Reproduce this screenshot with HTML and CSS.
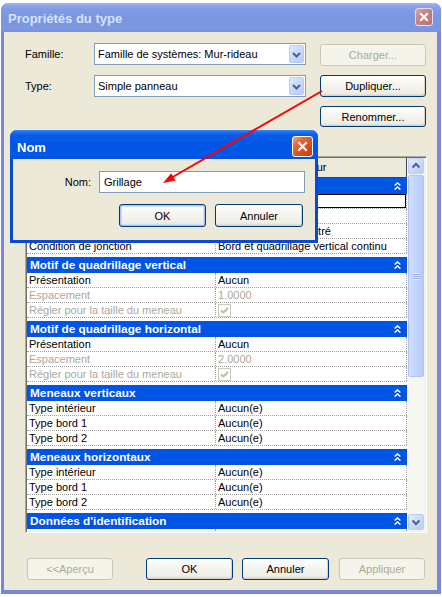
FILE: index.html
```html
<!DOCTYPE html>
<html lang="fr">
<head>
<meta charset="utf-8">
<title>Propriétés du type</title>
<link rel="stylesheet" href="styles.css">
</head>
<body>
<div class="win">
  <div class="win-title">
    <span class="win-title-text">Propriétés du type</span>
    <span class="xbtn xbtn-inactive"><svg width="10" height="10" viewBox="0 0 10 10"><path d="M1.2 1.2 L8.8 8.8 M8.8 1.2 L1.2 8.8" stroke="#fff" stroke-width="2.1" fill="none"/></svg></span>
  </div>
  <div class="client">
    <div class="form">
      <span class="lbl">Famille:</span>
      <div class="combo"><span class="combo-text">Famille de systèmes: Mur-rideau</span><span class="combo-btn"><svg width="13" height="17" viewBox="0 0 13 17"><path d="M3 7 L6.5 10.5 L10 7" fill="none" stroke="#4D6185" stroke-width="2"/></svg></span></div>
      <button class="btn is-disabled btn-charger">Charger...</button>
      <span class="lbl">Type:</span>
      <div class="combo"><span class="combo-text">Simple panneau</span><span class="combo-btn"><svg width="13" height="17" viewBox="0 0 13 17"><path d="M3 7 L6.5 10.5 L10 7" fill="none" stroke="#4D6185" stroke-width="2"/></svg></span></div>
      <button class="btn">Dupliquer...</button>
      <span class="cell-empty"></span>
      <span class="cell-empty"></span>
      <button class="btn btn-renommer">Renommer...</button>
    </div>

    <div class="grid-frame">
      <div class="grid-data">
        <div class="grid-head">
          <span class="hc hc1">Paramètre</span>
          <span class="hc hc2">Valeur</span>
        </div>
        <div class="grid-body">
          <div class="grp grp-first"><span>Construction</span><svg class="chev" width="7" height="8" viewBox="0 0 7 8"><path d="M0.6 3.6 L3.5 0.9 L6.4 3.6 M0.6 7.6 L3.5 4.9 L6.4 7.6" fill="none" stroke="#fff" stroke-width="1.4"/></svg></div>
          <div class="row"><span class="c1">Fonction</span><span class="c2 edit">Extérieur</span></div>
          <div class="row"><span class="c1">Incorporation automatique</span><span class="c2"><span class="chk"></span></span></div>
          <div class="row"><span class="c1">Panneau de mur-rideau</span><span class="c2">Panneau de mur : Vitré</span></div>
          <div class="row"><span class="c1">Condition de jonction</span><span class="c2">Bord et quadrillage vertical continu</span></div>

          <div class="grp"><span>Motif de quadrillage vertical</span><svg class="chev" width="7" height="8" viewBox="0 0 7 8"><path d="M0.6 3.6 L3.5 0.9 L6.4 3.6 M0.6 7.6 L3.5 4.9 L6.4 7.6" fill="none" stroke="#fff" stroke-width="1.4"/></svg></div>
          <div class="row"><span class="c1">Présentation</span><span class="c2">Aucun</span></div>
          <div class="row is-off"><span class="c1">Espacement</span><span class="c2">1.0000</span></div>
          <div class="row is-off"><span class="c1">Régler pour la taille du meneau</span><span class="c2"><span class="chk chk-off"><svg width="11" height="11" viewBox="0 0 11 11"><path d="M2 5.2 L4.4 7.6 L9 3" fill="none" stroke="#B9B6AA" stroke-width="1.8"/></svg></span></span></div>

          <div class="grp"><span>Motif de quadrillage horizontal</span><svg class="chev" width="7" height="8" viewBox="0 0 7 8"><path d="M0.6 3.6 L3.5 0.9 L6.4 3.6 M0.6 7.6 L3.5 4.9 L6.4 7.6" fill="none" stroke="#fff" stroke-width="1.4"/></svg></div>
          <div class="row"><span class="c1">Présentation</span><span class="c2">Aucun</span></div>
          <div class="row is-off"><span class="c1">Espacement</span><span class="c2">2.0000</span></div>
          <div class="row is-off"><span class="c1">Régler pour la taille du meneau</span><span class="c2"><span class="chk chk-off"><svg width="11" height="11" viewBox="0 0 11 11"><path d="M2 5.2 L4.4 7.6 L9 3" fill="none" stroke="#B9B6AA" stroke-width="1.8"/></svg></span></span></div>

          <div class="grp"><span>Meneaux verticaux</span><svg class="chev" width="7" height="8" viewBox="0 0 7 8"><path d="M0.6 3.6 L3.5 0.9 L6.4 3.6 M0.6 7.6 L3.5 4.9 L6.4 7.6" fill="none" stroke="#fff" stroke-width="1.4"/></svg></div>
          <div class="row"><span class="c1">Type intérieur</span><span class="c2">Aucun(e)</span></div>
          <div class="row"><span class="c1">Type bord 1</span><span class="c2">Aucun(e)</span></div>
          <div class="row"><span class="c1">Type bord 2</span><span class="c2">Aucun(e)</span></div>

          <div class="grp"><span>Meneaux horizontaux</span><svg class="chev" width="7" height="8" viewBox="0 0 7 8"><path d="M0.6 3.6 L3.5 0.9 L6.4 3.6 M0.6 7.6 L3.5 4.9 L6.4 7.6" fill="none" stroke="#fff" stroke-width="1.4"/></svg></div>
          <div class="row"><span class="c1">Type intérieur</span><span class="c2">Aucun(e)</span></div>
          <div class="row"><span class="c1">Type bord 1</span><span class="c2">Aucun(e)</span></div>
          <div class="row"><span class="c1">Type bord 2</span><span class="c2">Aucun(e)</span></div>

          <div class="grp"><span>Données d'identification</span><svg class="chev" width="7" height="8" viewBox="0 0 7 8"><path d="M0.6 3.6 L3.5 0.9 L6.4 3.6 M0.6 7.6 L3.5 4.9 L6.4 7.6" fill="none" stroke="#fff" stroke-width="1.4"/></svg></div>
          <div class="row"><span class="c1"></span><span class="c2"></span></div>
        </div>
      </div>
      <div class="vscroll">
        <span class="sb-btn"><svg width="14" height="14" viewBox="0 0 14 14"><path d="M3.5 8.5 L7 5 L10.5 8.5" fill="none" stroke="#4D6185" stroke-width="2"/></svg></span>
        <span class="sb-thumb"><span class="grip"></span></span>
        <span class="sb-space"></span>
        <span class="sb-btn"><svg width="14" height="14" viewBox="0 0 14 14"><path d="M3.5 5.5 L7 9 L10.5 5.5" fill="none" stroke="#4D6185" stroke-width="2"/></svg></span>
      </div>
    </div>

    <div class="footer">
      <button class="btn is-disabled btn-apercu">&lt;&lt;Aperçu</button>
      <button class="btn btn-ok">OK</button>
      <button class="btn btn-annuler">Annuler</button>
      <button class="btn is-disabled btn-appliquer">Appliquer</button>
    </div>
  </div>
</div>

<div class="dlg">
  <div class="dlg-title">
    <span class="dlg-title-text">Nom</span>
    <span class="xbtn xbtn-active"><svg width="11" height="11" viewBox="0 0 11 11"><path d="M1.3 1.3 L9.7 9.7 M9.7 1.3 L1.3 9.7" stroke="#fff" stroke-width="2.2" fill="none"/></svg></span>
  </div>
  <div class="dlg-client">
    <div class="dlg-row">
      <span class="dlg-lbl">Nom:</span>
      <input class="txt" type="text" value="Grillage">
    </div>
    <div class="dlg-btns">
      <button class="btn btn-default dlg-ok">OK</button>
      <button class="btn dlg-cancel">Annuler</button>
    </div>
  </div>
</div>

<svg class="arrow" width="442" height="597" viewBox="0 0 442 597">
  <line x1="322" y1="91" x2="171" y2="178" stroke="#F00" stroke-width="2"/>
  <polygon points="163,183 175.6,180.6 171.2,173.2" fill="#F00"/>
</svg>
</body>
</html>
```

FILE: styles.css
```css
* { box-sizing: border-box; }
html, body { margin: 0; padding: 0; }
body {
  background: #fff;
  width: 442px;
  height: 597px;
  overflow: hidden;
  position: relative;
  font-family: "Liberation Sans", Arial, sans-serif;
  font-size: 11px;
  color: #000;
}

/* ---------- main window ---------- */
.win {
  margin: 3px 0 0 1px;
  width: 440px;
  height: 591px;
  background: #7788D8;
  border-radius: 7px 7px 0 0;
  display: flex;
  flex-direction: column;
  overflow: hidden;
}
.win-title {
  height: 29px;
  flex: none;
  display: flex;
  align-items: flex-start;
  justify-content: space-between;
  padding: 0 8px 0 7px;
  background: linear-gradient(to bottom, #A9BCEF 0px, #93A9EA 2px, #819BE4 6px, #7A95E0 50%, #7D97E1 88%, #7A90DC 100%);
  border-radius: 7px 7px 0 0;
}
.win-title-text {
  margin-top: 8px;
  line-height: 16px;
  font-size: 13px;
  font-weight: bold;
  color: #D8E3F8;
}
.xbtn {
  display: flex;
  align-items: center;
  justify-content: center;
  border-radius: 3px;
  border: 1px solid #fff;
}
.xbtn-inactive {
  width: 18px;
  height: 18px;
  margin-top: 5px;
  border-color: #E8DDEE;
  background: linear-gradient(135deg, #DDA8AA 0%, #C98587 35%, #B97275 100%);
}
.xbtn-active {
  width: 21px;
  height: 21px;
  margin-top: 6px;
  background: linear-gradient(135deg, #F3A88A 0%, #E5653E 30%, #D6481C 70%, #C93E14 100%);
}

.client {
  flex: 1;
  margin: 0 4px 4px 3px;
  background: #ECE9D8;
  display: flex;
  flex-direction: column;
}

/* ---------- top form ---------- */
.form {
  display: grid;
  grid-template-columns: 55px 212px 106px;
  grid-template-rows: 22px 22px 22px;
  column-gap: 14px;
  row-gap: 10px;
  padding: 11px 0 0 21px;
}
.lbl {
  line-height: 22px;
  white-space: nowrap;
}
.combo {
  display: flex;
  height: 22px;
  border: 1px solid #7F9DB9;
  background: #fff;
  padding: 1px;
}
.combo-text {
  flex: 1;
  line-height: 19px;
  padding-left: 2px;
  white-space: nowrap;
  overflow: hidden;
}
.combo-btn {
  width: 15px;
  height: 18px;
  display: flex;
  align-items: center;
  justify-content: center;
  border: 1px solid #BACBF4;
  border-radius: 2px;
  background: linear-gradient(135deg, #E2EAFE 0%, #C8D7FC 50%, #B8CBF8 100%);
}

.btn {
  font-family: inherit;
  font-size: 11px;
  color: #000;
  padding: 0;
  height: 22px;
  border: 1px solid #003C74;
  border-radius: 3px;
  background: linear-gradient(to bottom, #FFFFFF 0%, #F6F5F0 40%, #EEEDE6 85%, #D9D5CA 100%);
  box-shadow: inset -1px -1px 0 #D6D0C5;
  white-space: nowrap;
}
.btn.is-disabled {
  color: #ACA899;
  border-color: #C9C7BA;
  background: #F5F4EA;
  box-shadow: none;
}
.btn-default {
  box-shadow: inset 0 0 0 1px #A9C3F2, inset 0 0 0 2px #CEDCF8;
}
.btn-charger { margin-top: 1px; }
.btn-renommer { margin-top: -1px; height: 21px; }

/* ---------- property grid ---------- */
.grid-frame {
  margin: 27px 0 0 21px;
  width: 402px;
  height: 377px;
  border: 1px solid;
  border-color: #ACA899 #FFFFFF #FFFFFF #ACA899;
  display: flex;
  box-shadow: inset 1px 1px 0 #716F64, inset -1px -1px 0 #F1EFE2;
  padding: 1px;
}
.grid-data {
  width: 380px;
  background: #fff;
  overflow: hidden;
  display: flex;
  flex-direction: column;
}
.grid-head {
  flex: none;
  height: 20px;
  display: grid;
  grid-template-columns: 189px 191px;
  background: #EBEADB;
  border-bottom: 1px solid #404040;
}
.hc {
  text-align: center;
  line-height: 19px;
}
.hc1 { border-right: 1px solid #ACA899; }
.hc2 { border-right: 1px solid #404040; }

.grid-body {
  flex: 1;
  overflow: hidden;
}
.grp {
  height: 16px;
  margin-top: 3px;
  background: #0055E5;
  color: #fff;
  font-weight: bold;
  font-size: 11.8px;
  display: flex;
  align-items: center;
  justify-content: space-between;
  padding: 0 6px 0 3px;
  white-space: nowrap;
}
.grp-first { margin-top: 0; }
.row {
  display: grid;
  grid-template-columns: 189px 191px;
  height: 15px;
  border-bottom: 1px dotted #A0A0A0;
  line-height: 14px;
  white-space: nowrap;
}
.c1 {
  padding-left: 2px;
  border-right: 1px dotted #A0A0A0;
  overflow: hidden;
}
.c2 {
  padding-left: 2px;
  border-right: 1px dotted #A0A0A0;
  overflow: hidden;
}
.c2.edit { box-shadow: inset 0 0 0 1px #000; }
.row.is-off { color: #ACA899; }
.chk {
  display: inline-flex;
  align-items: center;
  justify-content: center;
  width: 13px;
  height: 13px;
  margin-top: 1px;
  vertical-align: top;
  border: 1px solid #1C5180;
  background: #fff;
}
.chk.chk-off {
  border-color: #CAC8BB;
  background: #fff;
}

/* ---------- scrollbar ---------- */
.vscroll {
  width: 18px;
  display: flex;
  flex-direction: column;
  padding: 0 1px 1px 1px;
  background: #F7F7F2;
}
.sb-btn {
  flex: none;
  height: 16px;
  width: 16px;
  display: flex;
  align-items: center;
  justify-content: center;
  border: 1px solid #BCCDF5;
  border-radius: 2px;
  background: linear-gradient(135deg, #E6EEFE 0%, #CAD9FC 50%, #B9CCF8 100%);
}
.sb-thumb {
  flex: none;
  height: 202px;
  margin-top: 1px;
  display: flex;
  align-items: center;
  justify-content: center;
  border: 1px solid #AFC5F5;
  border-radius: 2px;
  background: linear-gradient(to right, #D2DEFD 0%, #C4D5FC 40%, #B7CBF8 100%);
}
.grip {
  width: 7px;
  height: 7px;
  background: repeating-linear-gradient(to bottom, #EEF3FE 0px, #EEF3FE 1px, #8CA6E2 1px, #8CA6E2 2px);
}
.sb-space { flex: 1; }

/* ---------- footer ---------- */
.footer {
  display: flex;
  margin-top: 25px;
  padding-left: 23px;
}
.btn-apercu { width: 86px; }
.btn-ok { width: 87px; margin-left: 33px; }
.btn-annuler { width: 87px; margin-left: 9px; }
.btn-appliquer { width: 86px; margin-left: 10px; }

/* ---------- "Nom" dialog (window over the main window) ---------- */
.dlg {
  position: absolute;
  left: 10px;
  top: 130px;
  width: 308px;
  height: 113px;
  background: #0A48D6;
  border-radius: 7px 7px 0 0;
  display: flex;
  flex-direction: column;
  overflow: hidden;
}
.dlg-title {
  height: 29px;
  flex: none;
  display: flex;
  align-items: flex-start;
  justify-content: space-between;
  padding: 0 5px 0 7px;
  background: linear-gradient(to bottom, #3F8CF3 0px, #1E6EEE 2px, #0A5CE8 5px, #0055E5 50%, #0058E8 85%, #0050DA 100%);
}
.dlg-title-text {
  margin-top: 10px;
  line-height: 16px;
  font-size: 13px;
  font-weight: bold;
  color: #fff;
}
.dlg-client {
  flex: 1;
  margin: 0 3px 3px 3px;
  background: #ECE9D8;
  padding-top: 12px;
}
.dlg-row {
  display: flex;
  align-items: center;
}
.dlg-lbl {
  width: 78px;
  text-align: right;
  margin-right: 8px;
}
.txt {
  width: 206px;
  height: 22px;
  border: 1px solid #7F9DB9;
  background: #fff;
  font-family: inherit;
  font-size: 11px;
  color: #000;
  padding: 0 4px;
  outline: none;
}
.dlg-btns {
  display: flex;
  margin-top: 11px;
  padding-left: 106px;
}
.dlg-ok { width: 87px; height: 23px; }
.dlg-cancel { width: 88px; height: 23px; margin-left: 9px; }

/* ---------- red annotation arrow ---------- */
.arrow {
  position: absolute;
  left: 0;
  top: 0;
  pointer-events: none;
}
```
